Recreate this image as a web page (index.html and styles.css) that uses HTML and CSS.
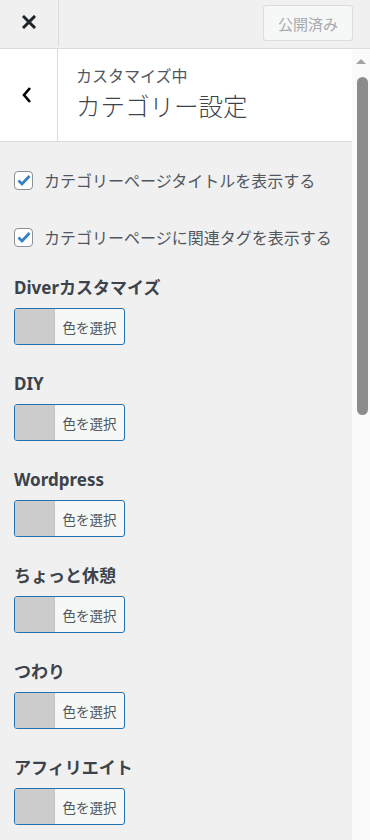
FILE: index.html
```html
<!DOCTYPE html>
<html lang="ja">
<head>
    <meta charset="UTF-8">
    <meta name="viewport" content="width=device-width, initial-scale=1.0">
    <title>カテゴリー設定</title>
    <link rel="stylesheet" href="styles.css">
</head>
<body>

    <div class="header">
        <div class="close">
            <svg width="14" height="14" viewBox="0 0 14 14">
                <path d="M2 2 L12 12 M12 2 L2 12" stroke="#1d2327" stroke-width="3" stroke-linecap="square"/>
            </svg>
        </div>
        <div class="publish">公開済み</div>
    </div>

    <div class="main">
        <div class="panel">
            <div class="section-head">
                <div class="back">
                    <svg width="12" height="18" viewBox="0 0 12 18">
                        <path d="M9 2 L3 9 L9 16" fill="none" stroke="#000" stroke-width="2.6"/>
                    </svg>
                </div>
                <div class="title-wrap">
                    <span class="action">カスタマイズ中</span>
                    <span class="title">カテゴリー設定</span>
                </div>
            </div>

            <div class="controls">
                <!-- チェックボックス -->
                <label class="check-row">
                    <span class="checkbox">
                        <svg width="14" height="12" viewBox="0 0 14 12">
                            <path d="M1.5 6.5 L5 10 L12.5 2" fill="none" stroke="#3582c4" stroke-width="2.8"/>
                        </svg>
                    </span>
                    <span>カテゴリーページタイトルを表示する</span>
                </label>
                <label class="check-row">
                    <span class="checkbox">
                        <svg width="14" height="12" viewBox="0 0 14 12">
                            <path d="M1.5 6.5 L5 10 L12.5 2" fill="none" stroke="#3582c4" stroke-width="2.8"/>
                        </svg>
                    </span>
                    <span>カテゴリーページに関連タグを表示する</span>
                </label>

                <!-- カテゴリー色 -->
                <div class="color-control">
                    <div class="color-label">Diverカスタマイズ</div>
                    <div class="color-btn"><span class="swatch"></span><span class="btn-text">色を選択</span></div>
                </div>
                <div class="color-control">
                    <div class="color-label">DIY</div>
                    <div class="color-btn"><span class="swatch"></span><span class="btn-text">色を選択</span></div>
                </div>
                <div class="color-control">
                    <div class="color-label">Wordpress</div>
                    <div class="color-btn"><span class="swatch"></span><span class="btn-text">色を選択</span></div>
                </div>
                <div class="color-control">
                    <div class="color-label">ちょっと休憩</div>
                    <div class="color-btn"><span class="swatch"></span><span class="btn-text">色を選択</span></div>
                </div>
                <div class="color-control">
                    <div class="color-label">つわり</div>
                    <div class="color-btn"><span class="swatch"></span><span class="btn-text">色を選択</span></div>
                </div>
                <div class="color-control">
                    <div class="color-label">アフィリエイト</div>
                    <div class="color-btn"><span class="swatch"></span><span class="btn-text">色を選択</span></div>
                </div>
            </div>
        </div>

        <div class="scrollbar">
            <div class="arrow"></div>
            <div class="thumb"></div>
        </div>
    </div>

</body>
</html>
```

FILE: styles.css
```css
body {
    margin: 0;
    width: 370px;
    height: 840px;
    overflow: hidden;
    font-family: 'Noto Sans', 'Noto Sans CJK JP', sans-serif;
    background-color: #f0f0f1;
    color: #50575e;
}

.header {
    display: flex;
    align-items: center;
    height: 48px;
    border-bottom: 1px solid #dcdcde;
    background-color: #f0f0f1;
}

.close {
    width: 58px;
    height: 48px;
    border-right: 1px solid #dcdcde;
    display: flex;
    justify-content: center;
    align-items: center;
    margin-top: -4px;
}

.publish {
    margin-left: auto;
    margin-right: 17px;
    width: 88px;
    height: 34px;
    border: 1px solid #dcdcde;
    border-radius: 3px;
    background-color: #f6f7f7;
    color: #a7aaad;
    font-size: 15px;
    display: flex;
    justify-content: center;
    align-items: center;
    margin-top: -2px;
}

.main {
    display: flex;
    height: 791px;
}

.panel {
    width: 352px;
    background-color: #f0f0f1;
}

.section-head {
    display: flex;
    height: 92px;
    background-color: #fff;
    border-bottom: 1px solid #dcdcde;
}

.back {
    width: 58px;
    border-right: 1px solid #dcdcde;
    display: flex;
    justify-content: center;
    align-items: center;
    padding-right: 3px;
    box-sizing: border-box;
}

.title-wrap {
    display: flex;
    flex-direction: column;
    padding: 17px 0 0 18px;
}

.action {
    font-size: 16px;
    line-height: 20px;
    color: #50575e;
}

.title {
    margin-top: 6px;
    font-size: 24.5px;
    line-height: 30px;
    font-weight: 300;
    color: #3c434a;
}

.controls {
    padding: 26px 14px 0 14px;
}

.check-row {
    display: flex;
    align-items: center;
    height: 24px;
    font-size: 16px;
    color: #50575e;
    margin-bottom: 33px;
}

.checkbox {
    width: 17px;
    height: 17px;
    border: 1px solid #8c8f94;
    border-radius: 4px;
    background-color: #fff;
    margin-right: 11px;
    display: flex;
    justify-content: center;
    align-items: center;
}

.check-row + .check-row {
    margin-bottom: 27px;
}

.color-control {
    margin-bottom: 27px;
}

.color-label {
    font-size: 17px;
    line-height: 24px;
    font-weight: bold;
    color: #3c434a;
    margin-bottom: 8px;
}

.color-btn {
    display: flex;
    width: 109px;
    height: 35px;
    border: 1px solid #2271b1;
    border-radius: 3px;
    overflow: hidden;
    background-color: #f6f7f7;
}

.swatch {
    width: 39px;
    background-color: #cccccc;
    border-right: 1px solid #c3c4c7;
}

.btn-text {
    flex: 1;
    display: flex;
    justify-content: center;
    align-items: center;
    font-size: 13.5px;
    color: #50575e;
}

.scrollbar {
    width: 18px;
    background-color: #fafafa;
    display: flex;
    flex-direction: column;
    align-items: center;
}

.arrow {
    margin-top: 10px;
    width: 0;
    height: 0;
    border-left: 5px solid transparent;
    border-right: 5px solid transparent;
    border-bottom: 5px solid #a3a3a3;
}

.thumb {
    margin-top: 13px;
    margin-left: 2px;
    width: 11px;
    height: 338px;
    border-radius: 6px;
    background-color: #8c8c8c;
}
```
